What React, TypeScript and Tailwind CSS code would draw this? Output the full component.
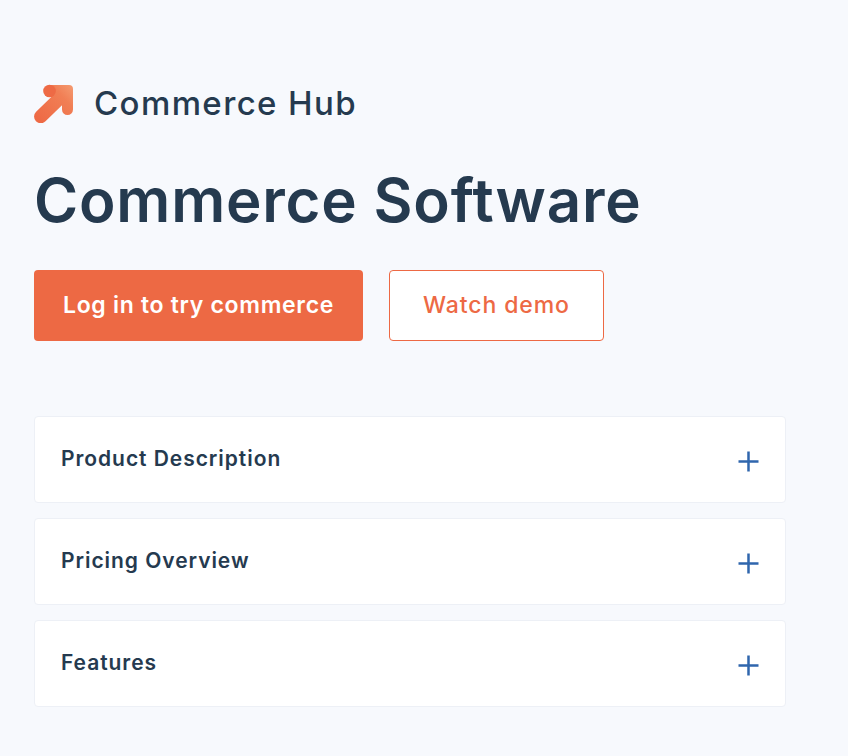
const sections = ["Product Description", "Pricing Overview", "Features"];

function HubIcon() {
  return (
    <svg width="42" height="40" viewBox="0 0 42 40" className="shrink-0">
      <defs>
        <linearGradient id="hub" gradientUnits="userSpaceOnUse" x1="4" y1="36" x2="38" y2="3">
          <stop offset="0" stopColor="#ee6a45" />
          <stop offset="0.7" stopColor="#f17f55" />
          <stop offset="1" stopColor="#f4996f" />
        </linearGradient>
      </defs>
      <path d="M15 2H35a4 4 0 0 1 4 4V26.500a5.500 5.500 0 0 1-11 0V14H15Z" fill="url(#hub)" />
      <path d="M6.800 33.500L30 11" stroke="url(#hub)" strokeWidth="13.500" strokeLinecap="round" />
      <circle cx="15.500" cy="8" r="6.300" fill="#ee6a45" />
    </svg>
  );
}

function PlusIcon() {
  return (
    <svg width="21" height="21" viewBox="0 0 21 21" className="mt-[3px] shrink-0">
      <path d="M10.500 0.500V20.500M0.500 10.500H20.500" stroke="#2f66ad" strokeWidth="2.500" />
    </svg>
  );
}

export default function App() {
  return (
    <div className="min-h-[756px] bg-[#f7f9fd] pl-[34px] pr-[62px] pt-[83px] text-[#253a4f] font-['Inter','Liberation_Sans',sans-serif]">
      <div className="flex items-center gap-[18px]">
        <HubIcon />
        <span className="text-[33px] leading-[40px] font-medium tracking-[1.4px]">Commerce Hub</span>
      </div>

      <h1 className="mt-[41px] text-[60px] leading-[72px] font-semibold tracking-[0.8px]">Commerce Software</h1>

      <div className="mt-[34px] flex gap-[26px]">
        <button className="h-[71px] w-[329px] rounded-[4px] bg-[#ed6944] text-[23px] font-semibold tracking-[0.7px] text-white">
          Log in to try commerce
        </button>
        <button className="h-[71px] w-[215px] rounded-[4px] border border-[#ed6944] bg-white text-[23px] font-medium tracking-[0.9px] text-[#ed6944]">
          Watch demo
        </button>
      </div>

      <div className="mt-[75px] flex flex-col gap-[15px]">
        {sections.map((title) => (
          <div
            key={title}
            className="flex h-[87px] items-center justify-between rounded-[4px] border border-[#edf0f6] bg-white pl-[26px] pr-[26px]"
          >
            <span className="-mt-[2px] text-[21px] font-semibold tracking-[0.95px]">{title}</span>
            <PlusIcon />
          </div>
        ))}
      </div>
    </div>
  );
}
